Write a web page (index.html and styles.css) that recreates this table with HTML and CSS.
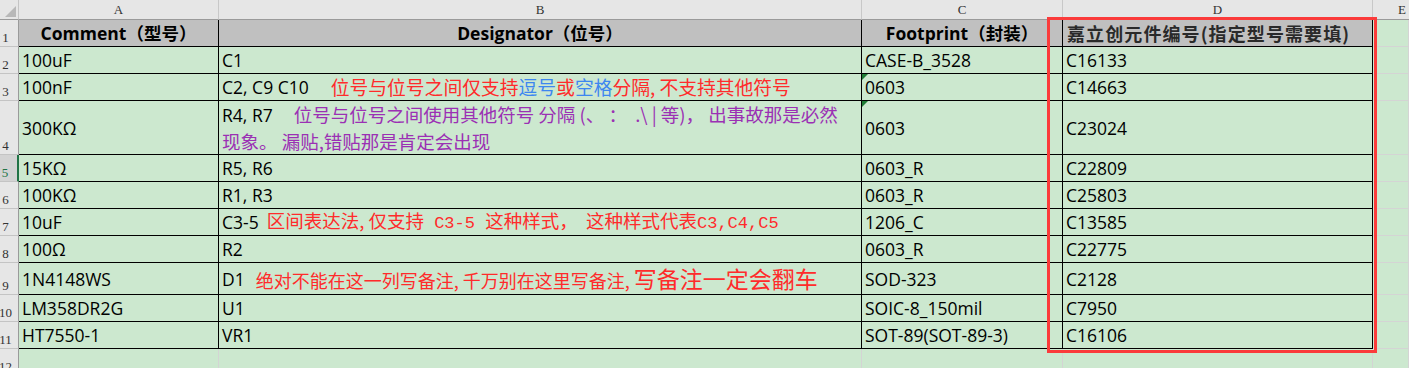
FILE: index.html
```html
<!DOCTYPE html>
<html lang="zh-CN">
<head>
<meta charset="utf-8">
<title>BOM</title>
<link rel="stylesheet" href="styles.css">
</head>
<body>
<div class="sheet">
  <div class="corner"><span class="corner-tri"></span></div>
  <div class="colhead">A</div>
  <div class="colhead">B</div>
  <div class="colhead">C</div>
  <div class="colhead">D</div>
  <div class="colhead colhead-e">E</div>

  <div class="rowhead">1</div>
  <div class="cell hdr center">Comment（型号）</div>
  <div class="cell hdr center">Designator（位号）</div>
  <div class="cell hdr center">Footprint（封装）</div>
  <div class="cell hdr hdr-cn">嘉立创元件编号(指定型号需要填)</div>
  <div class="blank"></div>

  <div class="rowhead">2</div>
  <div class="cell">100uF</div>
  <div class="cell">C1</div>
  <div class="cell">CASE-B_3528</div>
  <div class="cell">C16133</div>
  <div class="blank"></div>

  <div class="rowhead">3</div>
  <div class="cell">100nF</div>
  <div class="cell">C2, C9 C10<span class="note red gap-3">位号与位号之间仅支持<span class="blue">逗号</span>或<span class="blue">空格</span>分隔, 不支持其他符号</span></div>
  <div class="cell flag">0603</div>
  <div class="cell">C14663</div>
  <div class="blank"></div>

  <div class="rowhead">4</div>
  <div class="cell">300KΩ</div>
  <div class="cell two-line">
    <div>R4, R7<span class="note purple gap-4">位号与位号之间使用其他符号 分隔 (、 ：  .\ | 等)， 出事故那是必然</span></div>
    <div><span class="note purple">现象。 漏贴,错贴那是肯定会出现</span></div>
  </div>
  <div class="cell flag">0603</div>
  <div class="cell">C23024</div>
  <div class="blank"></div>

  <div class="rowhead active">5</div>
  <div class="cell">15KΩ</div>
  <div class="cell">R5, R6</div>
  <div class="cell">0603_R</div>
  <div class="cell">C22809</div>
  <div class="blank"></div>

  <div class="rowhead">6</div>
  <div class="cell">100KΩ</div>
  <div class="cell">R1, R3</div>
  <div class="cell">0603_R</div>
  <div class="cell">C25803</div>
  <div class="blank"></div>

  <div class="rowhead">7</div>
  <div class="cell">10uF</div>
  <div class="cell">C3-5<span class="note red gap-7">区间表达法, 仅支持<span class="mono"> C3-5 </span>这种样式，  这种样式代表<span class="mono">C3,C4,C5</span></span></div>
  <div class="cell">1206_C</div>
  <div class="cell">C13585</div>
  <div class="blank"></div>

  <div class="rowhead">8</div>
  <div class="cell">100Ω</div>
  <div class="cell">R2</div>
  <div class="cell">0603_R</div>
  <div class="cell">C22775</div>
  <div class="blank"></div>

  <div class="rowhead">9</div>
  <div class="cell">1N4148WS</div>
  <div class="cell">D1<span class="note red gap-9">绝对不能在这一列写备注, 千万别在这里写备注, <span class="big">写备注一定会翻车</span></span></div>
  <div class="cell">SOD-323</div>
  <div class="cell">C2128</div>
  <div class="blank"></div>

  <div class="rowhead">10</div>
  <div class="cell">LM358DR2G</div>
  <div class="cell">U1</div>
  <div class="cell">SOIC-8_150mil</div>
  <div class="cell">C7950</div>
  <div class="blank"></div>

  <div class="rowhead">11</div>
  <div class="cell">HT7550-1</div>
  <div class="cell">VR1</div>
  <div class="cell">SOT-89(SOT-89-3)</div>
  <div class="cell">C16106</div>
  <div class="blank"></div>

  <div class="rowhead">12</div>
  <div class="blank"></div>
  <div class="blank"></div>
  <div class="blank"></div>
  <div class="blank"></div>
  <div class="blank"></div>

  <div class="highlight-box"></div>
</div>
</body>
</html>
```

FILE: styles.css
```css
html, body {
  margin: 0;
  padding: 0;
  background: #cce8cf;
  overflow: hidden;
}

.sheet {
  position: relative;
  width: 1409px;
  height: 368px;
  overflow: hidden;
  display: grid;
  grid-template-columns: 19px 200px 643px 201px 310px 1fr;
  grid-template-rows: 20px 27px 27px 27px 54px 27px 27px 27px 27px 32px 27px 27px 27px;
  background: #cce8cf;
  font-family: "Open Sans", "Noto Sans CJK SC", sans-serif;
  font-size: 17.5px;
  color: #000;
}

.corner {
  position: relative;
  background: #e6e6e6;
  border-right: 1px solid #c4c4c4;
  border-bottom: 1px solid #9a9a9a;
}

.corner-tri {
  position: absolute;
  right: 2px;
  bottom: 2px;
  width: 0;
  height: 0;
  border-left: 11px solid transparent;
  border-bottom: 11px solid #b8b8b8;
}

.colhead {
  background: #e6e6e6;
  border-right: 1px solid #c8c8c8;
  border-bottom: 1px solid #9a9a9a;
  display: flex;
  align-items: flex-end;
  justify-content: center;
  font-family: "Liberation Serif", "DejaVu Serif", serif;
  font-size: 13px;
  line-height: 14px;
  padding-bottom: 2px;
  color: #333;
  box-sizing: border-box;
}

.colhead-e {
  justify-content: flex-start;
  padding-left: 25px;
  border-right: none;
}

.rowhead {
  background: #e6e6e6;
  border-right: 1px solid #9a9a9a;
  border-bottom: 1px solid #c4c4c4;
  display: flex;
  align-items: flex-end;
  justify-content: center;
  padding-right: 7px;
  padding-bottom: 1px;
  box-sizing: border-box;
  font-family: "Liberation Serif", "DejaVu Serif", serif;
  font-size: 13px;
  line-height: 14px;
  color: #333;
  white-space: nowrap;
}

.rowhead.active {
  background: #d3d3d3;
  color: #217346;
  border-right: 2px solid #217346;
}

.cell {
  position: relative;
  border-right: 1px solid #000;
  border-bottom: 1px solid #000;
  display: flex;
  align-items: center;
  padding-left: 3px;
  line-height: 22px;
  white-space: nowrap;
  overflow: visible;
  min-width: 0;
}

.hdr {
  background: #c0c0c0;
  font-weight: bold;
}

.center {
  justify-content: center;
  padding-left: 0;
}

.hdr-cn {
  font-family: "Noto Sans CJK SC", sans-serif;
  font-size: 18px;
  letter-spacing: 1.1px;
  color: #2a2a2a;
  padding-left: 4px;
}

.flag::before {
  content: "";
  position: absolute;
  left: 0;
  top: 0;
  width: 0;
  height: 0;
  border-top: 6px solid #1e7b34;
  border-right: 6px solid transparent;
}

.two-line {
  flex-direction: column;
  align-items: flex-start;
  justify-content: center;
  line-height: 26px;
}

.note {
  font-family: "Noto Sans CJK SC", sans-serif;
  font-size: 18.5px;
  white-space: pre;
}

.mono {
  font-family: "Liberation Mono", monospace;
  font-size: 17px;
}

.red { color: #ff2b2b; }
.blue { color: #3d86f0; }
.purple { color: #9b30b4; }

.big { font-size: 23px; }

.gap-3 { margin-left: 22px; font-size: 18.8px; }
.gap-4 { margin-left: 21px; }
.gap-7 { margin-left: 8px; }
.gap-9 { margin-left: 11px; font-size: 18px; }
.gap-9 .big { font-size: 23px; }

.blank {
  border-right: 1px solid #d4d4d4;
  border-bottom: 1px solid #d4d4d4;
}

.highlight-box {
  position: absolute;
  left: 1047px;
  top: 17px;
  width: 330px;
  height: 336px;
  box-sizing: border-box;
  border: 3px solid #fb3b3b;
  pointer-events: none;
}
```
